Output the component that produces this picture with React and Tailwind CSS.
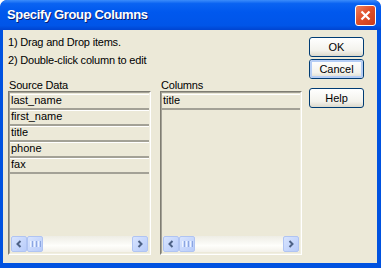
import React from "react";

const font = { fontFamily: '"Liberation Sans", Arial, sans-serif' };

function Row({ children }) {
  return (
    <div className="h-[16px] border-t border-t-[#ffffff] border-b-2 border-b-[#a3a196] pl-[1px] pb-[1px] text-[11px] leading-[13px] text-black flex items-end">
      {children}
    </div>
  );
}

function ScrollBtn({ dir }) {
  return (
    <div className="w-[16px] h-[16px] rounded-[2px] border border-[#b0c4f2] bg-[linear-gradient(135deg,#d8e4fe,#b8ccfa)] flex items-center justify-center">
      <svg width="8" height="8" viewBox="0 0 8 8">
        {dir === "left" ? (
          <path d="M5.5 1 L2.5 4 L5.5 7" stroke="#4d6185" strokeWidth="2" fill="none" />
        ) : (
          <path d="M2.5 1 L5.5 4 L2.5 7" stroke="#4d6185" strokeWidth="2" fill="none" />
        )}
      </svg>
    </div>
  );
}

function ScrollBar() {
  return (
    <div className="h-[16px] flex bg-[linear-gradient(to_bottom,#eeede5,#fefefb_60%,#f3f1ea)]">
      <ScrollBtn dir="left" />
      <div className="w-[16px] h-[16px] rounded-[2px] border border-[#b0c4f2] bg-[linear-gradient(135deg,#d8e4fe,#b8ccfa)] flex items-center justify-center gap-[1px]">
        <div className="w-[1px] h-[6px] bg-[#eef4fe]" />
        <div className="w-[1px] h-[6px] bg-[#8ca6e0]" />
        <div className="w-[1px] h-[6px] bg-[#eef4fe]" />
        <div className="w-[1px] h-[6px] bg-[#8ca6e0]" />
        <div className="w-[1px] h-[6px] bg-[#eef4fe]" />
        <div className="w-[1px] h-[6px] bg-[#8ca6e0]" />
      </div>
      <div className="flex-1" />
      <ScrollBtn dir="right" />
    </div>
  );
}

function ListBox({ items, width }) {
  return (
    <div
      className="h-[164px] border border-t-[#7f7d72] border-l-[#7f7d72] border-b-[#ffffff] border-r-[#ffffff] flex flex-col"
      style={{ width }}
    >
      <div className="flex-1 border border-t-[#a3a196] border-l-[#a3a196] border-b-[#f1efe2] border-r-[#f1efe2] flex flex-col">
        <div className="flex-1 flex flex-col pt-[1px]">
          {items.map((t) => (
            <Row key={t}>{t}</Row>
          ))}
        </div>
        <div className="px-[1px] pb-[1px]">
          <ScrollBar />
        </div>
      </div>
    </div>
  );
}

function Btn({ children, focus, className = "" }) {
  return (
    <div className={"w-[55px] h-[20px] rounded-[3px] border border-[#003c74] bg-[linear-gradient(to_bottom,#ffffff,#f3f2ec_70%,#dcd9cc)] flex items-center justify-center " + className}>
      <div
        className={
          "w-full h-full rounded-[2px] flex items-center justify-center text-[11px] text-black " +
          (focus ? "border-2 border-[#b5cdf5]" : "")
        }
      >
        {children}
      </div>
    </div>
  );
}

export default function App() {
  return (
    <div style={font} className="w-[381px] h-[268px] bg-[#0052e0] rounded-t-[7px] flex flex-col overflow-hidden">
      <div className="h-[30px] shrink-0 rounded-t-[7px] bg-[linear-gradient(to_bottom,#3b8cfb_0%,#0a63f2_12%,#0058ee_40%,#0055e8_85%,#0044d0_100%)] flex items-center pl-[7px] pr-[5px]">
        <div
          className="flex-1 text-white font-bold text-[13px] tracking-[-0.35px]"
          style={{ textShadow: "1px 1px 0 #0a1e72" }}
        >
          Specify Group Columns
        </div>
        <div className="w-[21px] h-[21px] rounded-[3px] border border-white bg-[linear-gradient(135deg,#ee8260,#e0502a_45%,#c93c1a)] flex items-center justify-center">
          <svg width="11" height="11" viewBox="0 0 11 11">
            <path d="M1.5 1.5 L9.5 9.5 M9.5 1.5 L1.5 9.5" stroke="#ffffff" strokeWidth="2.2" />
          </svg>
        </div>
      </div>
      <div className="flex-1 ml-[3px] mr-[4px] mb-[5px] bg-[#ece9d8] flex pl-[5px] pt-[3px]">
        <div className="flex flex-col">
          <div className="text-[11px] leading-[18px] text-black tracking-[-0.2px]">1) Drag and Drop items.</div>
          <div className="text-[11px] leading-[18px] text-black tracking-[-0.2px]">2) Double-click column to edit</div>
          <div className="flex gap-[9px] mt-[10px]">
            <div className="flex flex-col">
              <div className="text-[11px] leading-[12px] text-black pl-[1px] tracking-[-0.2px]">Source Data</div>
              <ListBox items={["last_name", "first_name", "title", "phone", "fax"]} width={143} />
            </div>
            <div className="flex flex-col">
              <div className="text-[11px] leading-[12px] text-black pl-[1px] tracking-[-0.2px]">Columns</div>
              <ListBox items={["title"]} width={142} />
            </div>
          </div>
        </div>
        <div className="ml-[7px] pt-[4px] flex flex-col">
          <Btn>OK</Btn>
          <Btn focus className="mt-[2px]">Cancel</Btn>
          <Btn className="mt-[9px]">Help</Btn>
        </div>
      </div>
    </div>
  );
}
